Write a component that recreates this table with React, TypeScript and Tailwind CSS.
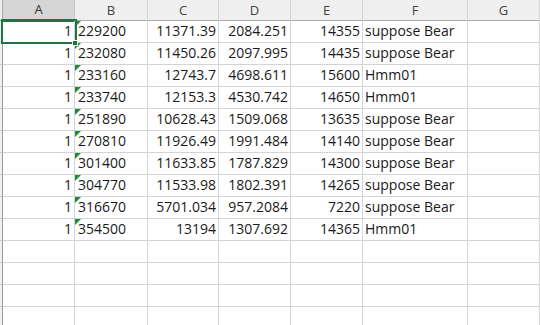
import React from 'react';

const rows: [string, string, string, string, string, string][] = [
  ['1', '229200', '11371.39', '2084.251', '14355', 'suppose Bear'],
  ['1', '232080', '11450.26', '2097.995', '14435', 'suppose Bear'],
  ['1', '233160', '12743.7', '4698.611', '15600', 'Hmm01'],
  ['1', '233740', '12153.3', '4530.742', '14650', 'Hmm01'],
  ['1', '251890', '10628.43', '1509.068', '13635', 'suppose Bear'],
  ['1', '270810', '11926.49', '1991.484', '14140', 'suppose Bear'],
  ['1', '301400', '11633.85', '1787.829', '14300', 'suppose Bear'],
  ['1', '304770', '11533.98', '1802.391', '14265', 'suppose Bear'],
  ['1', '316670', '5701.034', '957.2084', '7220', 'suppose Bear'],
  ['1', '354500', '13194', '1307.692', '14365', 'Hmm01'],
];

const cols = ['A', 'B', 'C', 'D', 'E', 'F', 'G'];
const grid = 'grid grid-cols-[3px_72px_73px_71px_72px_72px_105px_1fr]';
const cell = 'h-[22px] border-r border-b border-[#d4d4d4] overflow-hidden whitespace-nowrap leading-[20px]';

export default function App() {
  const blanks = Array.from({ length: 4 });

  return (
    <div
      className="relative w-[540px] h-[325px] overflow-hidden bg-white text-[#1a1a1a] text-[14px]"
      style={{ fontFamily: '"Open Sans", "Noto Sans", sans-serif' }}
    >
      {/* Column headers */}
      <div className={`${grid} h-[21px] bg-[#efefef] border-b border-[#ababab] text-[13px] text-[#444]`}>
        <div className="border-r border-[#ababab]" />
        {cols.map((c, i) => (
          <div
            key={c}
            className={
              i === 0
                ? 'flex items-center justify-center bg-[#d6d6d6] border-r border-[#c6c6c6] border-b-2 border-b-[#217346] text-[#333]'
                : 'flex items-center justify-center border-r border-[#d4d4d4]'
            }
          >
            {c}
          </div>
        ))}
      </div>

      {/* Data rows */}
      {rows.map((r, ri) => (
        <div key={ri} className={grid}>
          <div className="h-[22px] bg-[#efefef] border-r border-b border-r-[#9b9b9b] border-b-[#c8c8c8]" />
          <div className={`${cell} text-right pr-[2px]`}>{r[0]}</div>
          <div className={`${cell} relative pl-[3px]`}>
            <span className="absolute left-0 top-0 w-0 h-0 border-t-[6px] border-r-[6px] border-t-[#1f8a3a] border-r-transparent" />
            {r[1]}
          </div>
          <div className={`${cell} text-right pr-[2px]`}>{r[2]}</div>
          <div className={`${cell} text-right pr-[2px]`}>{r[3]}</div>
          <div className={`${cell} text-right pr-[2px]`}>{r[4]}</div>
          <div className={`${cell} pl-[2px]`}>{r[5]}</div>
          <div className={cell} />
        </div>
      ))}

      {/* Empty rows */}
      {blanks.map((_, bi) => (
        <div key={`b${bi}`} className={grid}>
          <div className="h-[22px] bg-[#efefef] border-r border-b border-r-[#9b9b9b] border-b-[#c8c8c8]" />
          {cols.map((c) => (
            <div key={c} className={cell} />
          ))}
        </div>
      ))}

      {/* Active cell A1 */}
      <div className="absolute left-[1px] top-[19px] w-[76px] h-[25px] border-2 border-[#217346] pointer-events-none" />
      <div className="absolute left-[72px] top-[40px] w-[6px] h-[6px] bg-[#217346] border border-white" />
    </div>
  );
}
